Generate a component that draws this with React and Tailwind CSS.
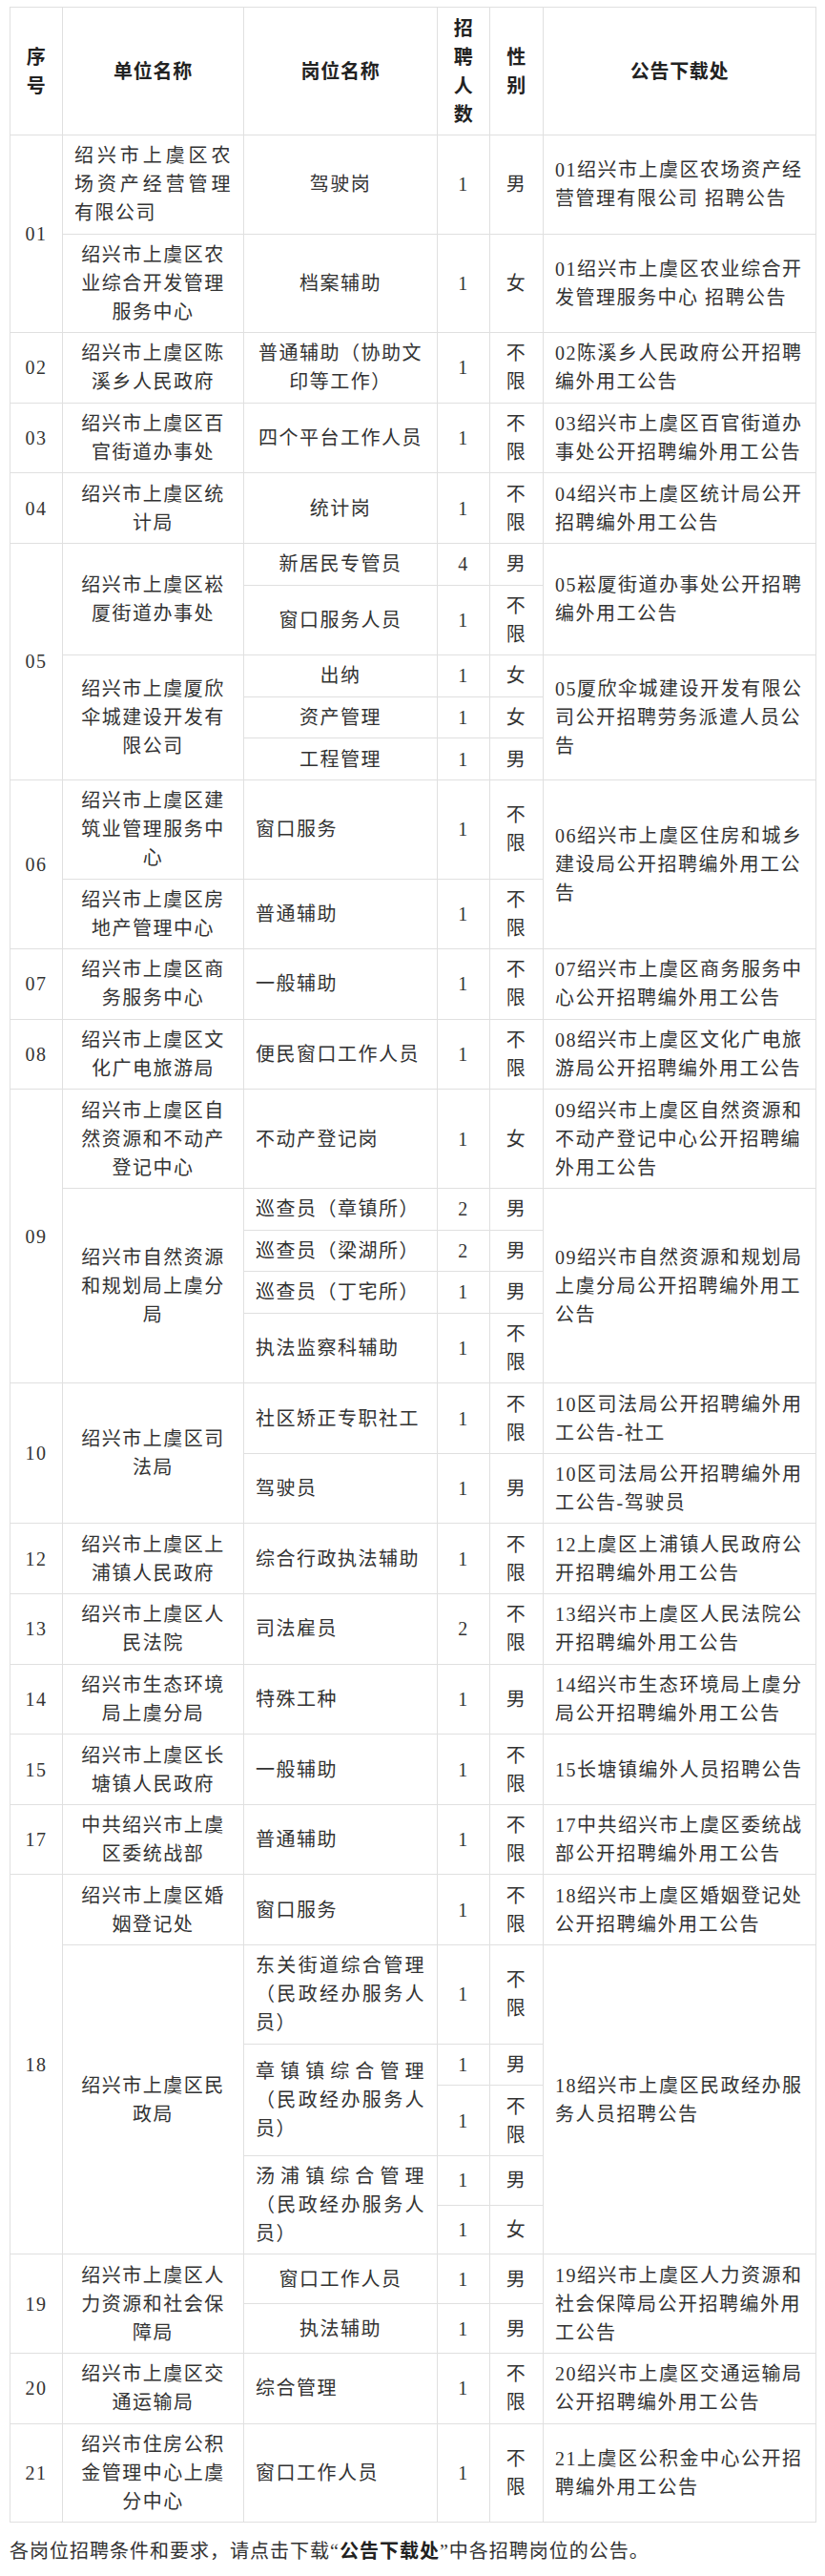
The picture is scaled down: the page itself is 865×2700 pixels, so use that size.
import React from 'react';

const Td = ({ children, className = '', ...rest }) => (
    <td className={`border border-[#e0e0e0] px-3 py-[6.3px] align-middle ${className}`} {...rest}>
        {children}
    </td>
);

const Th = ({ children }) => (
    <th className="border border-[#e0e0e0] px-3 py-[6.5px] align-middle text-center font-bold text-[#222] tracking-[0.7px]">
        {children}
    </th>
);

export default function App() {
    return (
        <div lang="zh-CN" className="bg-white px-[10px] pt-[7px] pb-6 text-[#333] text-[20px] leading-[30px] tracking-[1.5px] font-['Liberation_Serif','Noto_Sans_CJK_SC',serif]">
            <table className="w-[845px] table-fixed border-collapse">
                <colgroup>
                    <col className="w-[55px]" />
                    <col className="w-[190px]" />
                    <col className="w-[203px]" />
                    <col className="w-[55px]" />
                    <col className="w-[56px]" />
                    <col className="w-[286px]" />
                </colgroup>
                <thead>
                    <tr>
                        <Th>序号</Th>
                        <Th>单位名称</Th>
                        <Th>岗位名称</Th>
                        <Th>招聘人数</Th>
                        <Th>性别</Th>
                        <Th>公告下载处</Th>
                    </tr>
                </thead>
                <tbody>
                    {/* 01 */}
                    <tr>
                        <Td rowSpan={2} className="text-center">01</Td>
                        <Td className="text-justify">绍兴市上虞区农场资产经营管理有限公司</Td>
                        <Td className="text-center">驾驶岗</Td>
                        <Td className="text-center">1</Td>
                        <Td className="text-center">男</Td>
                        <Td>01绍兴市上虞区农场资产经营管理有限公司 招聘公告</Td>
                    </tr>
                    <tr>
                        <Td className="text-center">绍兴市上虞区农业综合开发管理服务中心</Td>
                        <Td className="text-center">档案辅助</Td>
                        <Td className="text-center">1</Td>
                        <Td className="text-center">女</Td>
                        <Td>01绍兴市上虞区农业综合开发管理服务中心 招聘公告</Td>
                    </tr>

                    {/* 02 - 04 */}
                    <tr>
                        <Td className="text-center">02</Td>
                        <Td className="text-center">绍兴市上虞区陈溪乡人民政府</Td>
                        <Td className="text-center">普通辅助（协助文印等工作）</Td>
                        <Td className="text-center">1</Td>
                        <Td className="text-center">不限</Td>
                        <Td>02陈溪乡人民政府公开招聘编外用工公告</Td>
                    </tr>
                    <tr>
                        <Td className="text-center">03</Td>
                        <Td className="text-center">绍兴市上虞区百官街道办事处</Td>
                        <Td className="text-center">四个平台工作人员</Td>
                        <Td className="text-center">1</Td>
                        <Td className="text-center">不限</Td>
                        <Td>03绍兴市上虞区百官街道办事处公开招聘编外用工公告</Td>
                    </tr>
                    <tr>
                        <Td className="text-center">04</Td>
                        <Td className="text-center">绍兴市上虞区统计局</Td>
                        <Td className="text-center">统计岗</Td>
                        <Td className="text-center">1</Td>
                        <Td className="text-center">不限</Td>
                        <Td>04绍兴市上虞区统计局公开招聘编外用工公告</Td>
                    </tr>

                    {/* 05 */}
                    <tr>
                        <Td rowSpan={5} className="text-center">05</Td>
                        <Td rowSpan={2} className="text-center">绍兴市上虞区崧厦街道办事处</Td>
                        <Td className="text-center">新居民专管员</Td>
                        <Td className="text-center">4</Td>
                        <Td className="text-center">男</Td>
                        <Td rowSpan={2}>05崧厦街道办事处公开招聘编外用工公告</Td>
                    </tr>
                    <tr>
                        <Td className="text-center">窗口服务人员</Td>
                        <Td className="text-center">1</Td>
                        <Td className="text-center">不限</Td>
                    </tr>
                    <tr>
                        <Td rowSpan={3} className="text-center">绍兴市上虞厦欣伞城建设开发有限公司</Td>
                        <Td className="text-center">出纳</Td>
                        <Td className="text-center">1</Td>
                        <Td className="text-center">女</Td>
                        <Td rowSpan={3}>05厦欣伞城建设开发有限公司公开招聘劳务派遣人员公告</Td>
                    </tr>
                    <tr>
                        <Td className="text-center">资产管理</Td>
                        <Td className="text-center">1</Td>
                        <Td className="text-center">女</Td>
                    </tr>
                    <tr>
                        <Td className="text-center">工程管理</Td>
                        <Td className="text-center">1</Td>
                        <Td className="text-center">男</Td>
                    </tr>

                    {/* 06 */}
                    <tr>
                        <Td rowSpan={2} className="text-center">06</Td>
                        <Td className="text-center">绍兴市上虞区建筑业管理服务中心</Td>
                        <Td>窗口服务</Td>
                        <Td className="text-center">1</Td>
                        <Td className="text-center">不限</Td>
                        <Td rowSpan={2}>06绍兴市上虞区住房和城乡建设局公开招聘编外用工公告</Td>
                    </tr>
                    <tr>
                        <Td className="text-center">绍兴市上虞区房地产管理中心</Td>
                        <Td>普通辅助</Td>
                        <Td className="text-center">1</Td>
                        <Td className="text-center">不限</Td>
                    </tr>

                    {/* 07 - 08 */}
                    <tr>
                        <Td className="text-center">07</Td>
                        <Td className="text-center">绍兴市上虞区商务服务中心</Td>
                        <Td>一般辅助</Td>
                        <Td className="text-center">1</Td>
                        <Td className="text-center">不限</Td>
                        <Td>07绍兴市上虞区商务服务中心公开招聘编外用工公告</Td>
                    </tr>
                    <tr>
                        <Td className="text-center">08</Td>
                        <Td className="text-center">绍兴市上虞区文化广电旅游局</Td>
                        <Td>便民窗口工作人员</Td>
                        <Td className="text-center">1</Td>
                        <Td className="text-center">不限</Td>
                        <Td>08绍兴市上虞区文化广电旅游局公开招聘编外用工公告</Td>
                    </tr>

                    {/* 09 */}
                    <tr>
                        <Td rowSpan={5} className="text-center">09</Td>
                        <Td className="text-center">绍兴市上虞区自然资源和不动产登记中心</Td>
                        <Td>不动产登记岗</Td>
                        <Td className="text-center">1</Td>
                        <Td className="text-center">女</Td>
                        <Td>09绍兴市上虞区自然资源和不动产登记中心公开招聘编外用工公告</Td>
                    </tr>
                    <tr>
                        <Td rowSpan={4} className="text-center">绍兴市自然资源和规划局上虞分局</Td>
                        <Td>巡查员（章镇所）</Td>
                        <Td className="text-center">2</Td>
                        <Td className="text-center">男</Td>
                        <Td rowSpan={4}>09绍兴市自然资源和规划局上虞分局公开招聘编外用工公告</Td>
                    </tr>
                    <tr>
                        <Td>巡查员（梁湖所）</Td>
                        <Td className="text-center">2</Td>
                        <Td className="text-center">男</Td>
                    </tr>
                    <tr>
                        <Td>巡查员（丁宅所）</Td>
                        <Td className="text-center">1</Td>
                        <Td className="text-center">男</Td>
                    </tr>
                    <tr>
                        <Td>执法监察科辅助</Td>
                        <Td className="text-center">1</Td>
                        <Td className="text-center">不限</Td>
                    </tr>

                    {/* 10 */}
                    <tr>
                        <Td rowSpan={2} className="text-center">10</Td>
                        <Td rowSpan={2} className="text-center">绍兴市上虞区司法局</Td>
                        <Td>社区矫正专职社工</Td>
                        <Td className="text-center">1</Td>
                        <Td className="text-center">不限</Td>
                        <Td>10区司法局公开招聘编外用工公告-社工</Td>
                    </tr>
                    <tr>
                        <Td>驾驶员</Td>
                        <Td className="text-center">1</Td>
                        <Td className="text-center">男</Td>
                        <Td>10区司法局公开招聘编外用工公告-驾驶员</Td>
                    </tr>

                    {/* 12 - 17 */}
                    <tr>
                        <Td className="text-center">12</Td>
                        <Td className="text-center">绍兴市上虞区上浦镇人民政府</Td>
                        <Td>综合行政执法辅助</Td>
                        <Td className="text-center">1</Td>
                        <Td className="text-center">不限</Td>
                        <Td>12上虞区上浦镇人民政府公开招聘编外用工公告</Td>
                    </tr>
                    <tr>
                        <Td className="text-center">13</Td>
                        <Td className="text-center">绍兴市上虞区人民法院</Td>
                        <Td>司法雇员</Td>
                        <Td className="text-center">2</Td>
                        <Td className="text-center">不限</Td>
                        <Td>13绍兴市上虞区人民法院公开招聘编外用工公告</Td>
                    </tr>
                    <tr>
                        <Td className="text-center">14</Td>
                        <Td className="text-center">绍兴市生态环境局上虞分局</Td>
                        <Td>特殊工种</Td>
                        <Td className="text-center">1</Td>
                        <Td className="text-center">男</Td>
                        <Td>14绍兴市生态环境局上虞分局公开招聘编外用工公告</Td>
                    </tr>
                    <tr>
                        <Td className="text-center">15</Td>
                        <Td className="text-center">绍兴市上虞区长塘镇人民政府</Td>
                        <Td>一般辅助</Td>
                        <Td className="text-center">1</Td>
                        <Td className="text-center">不限</Td>
                        <Td>15长塘镇编外人员招聘公告</Td>
                    </tr>
                    <tr>
                        <Td className="text-center">17</Td>
                        <Td className="text-center">中共绍兴市上虞区委统战部</Td>
                        <Td>普通辅助</Td>
                        <Td className="text-center">1</Td>
                        <Td className="text-center">不限</Td>
                        <Td>17中共绍兴市上虞区委统战部公开招聘编外用工公告</Td>
                    </tr>

                    {/* 18 */}
                    <tr>
                        <Td rowSpan={6} className="text-center">18</Td>
                        <Td className="text-center">绍兴市上虞区婚姻登记处</Td>
                        <Td>窗口服务</Td>
                        <Td className="text-center">1</Td>
                        <Td className="text-center">不限</Td>
                        <Td>18绍兴市上虞区婚姻登记处公开招聘编外用工公告</Td>
                    </tr>
                    <tr>
                        <Td rowSpan={5} className="text-center">绍兴市上虞区民政局</Td>
                        <Td className="text-justify">东关街道综合管理（民政经办服务人员）</Td>
                        <Td className="text-center">1</Td>
                        <Td className="text-center">不限</Td>
                        <Td rowSpan={5}>18绍兴市上虞区民政经办服务人员招聘公告</Td>
                    </tr>
                    <tr>
                        <Td rowSpan={2} className="text-justify">章镇镇综合管理（民政经办服务人员）</Td>
                        <Td className="text-center">1</Td>
                        <Td className="text-center">男</Td>
                    </tr>
                    <tr>
                        <Td className="text-center">1</Td>
                        <Td className="text-center">不限</Td>
                    </tr>
                    <tr>
                        <Td rowSpan={2} className="text-justify">汤浦镇综合管理（民政经办服务人员）</Td>
                        <Td className="text-center">1</Td>
                        <Td className="text-center">男</Td>
                    </tr>
                    <tr>
                        <Td className="text-center">1</Td>
                        <Td className="text-center">女</Td>
                    </tr>

                    {/* 19 */}
                    <tr>
                        <Td rowSpan={2} className="text-center">19</Td>
                        <Td rowSpan={2} className="text-center">绍兴市上虞区人力资源和社会保障局</Td>
                        <Td className="text-center">窗口工作人员</Td>
                        <Td className="text-center">1</Td>
                        <Td className="text-center">男</Td>
                        <Td rowSpan={2}>19绍兴市上虞区人力资源和社会保障局公开招聘编外用工公告</Td>
                    </tr>
                    <tr>
                        <Td className="text-center">执法辅助</Td>
                        <Td className="text-center">1</Td>
                        <Td className="text-center">男</Td>
                    </tr>

                    {/* 20 - 21 */}
                    <tr>
                        <Td className="text-center">20</Td>
                        <Td className="text-center">绍兴市上虞区交通运输局</Td>
                        <Td>综合管理</Td>
                        <Td className="text-center">1</Td>
                        <Td className="text-center">不限</Td>
                        <Td>20绍兴市上虞区交通运输局公开招聘编外用工公告</Td>
                    </tr>
                    <tr>
                        <Td className="text-center">21</Td>
                        <Td className="text-center">绍兴市住房公积金管理中心上虞分中心</Td>
                        <Td>窗口工作人员</Td>
                        <Td className="text-center">1</Td>
                        <Td className="text-center">不限</Td>
                        <Td>21上虞区公积金中心公开招聘编外用工公告</Td>
                    </tr>
                </tbody>
            </table>

            <p className="mt-[15px] tracking-[1px]">
                各岗位招聘条件和要求，请点击下载“<strong className="font-bold text-[#222]">公告下载处</strong>”中各招聘岗位的公告。
            </p>
        </div>
    );
}
